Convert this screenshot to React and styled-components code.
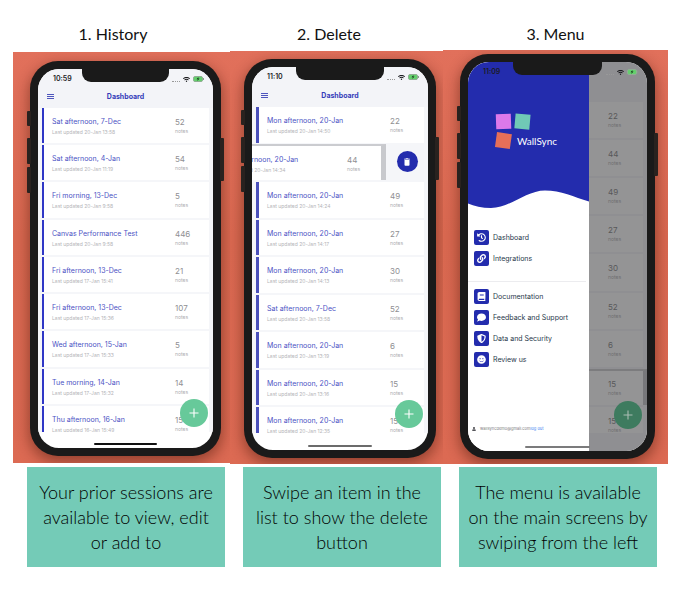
import React from "react";
import styled, { createGlobalStyle, css } from "styled-components";
import {
  FaHistory,
  FaLink,
  FaBook,
  FaComment,
  FaShieldAlt,
  FaSmile,
  FaUser,
  FaWifi,
} from "react-icons/fa";
import { MdDelete } from "react-icons/md";

const GlobalStyle = createGlobalStyle`
  * { box-sizing: border-box; }
  body {
    margin: 0;
    background: #fff;
    font-family: Inter, "Liberation Sans", sans-serif;
  }
  button { font: inherit; border: 0; padding: 0; cursor: pointer; }
  h2, h3, p, ul { margin: 0; padding: 0; }
  ul { list-style: none; }
`;

const indigo = "#232cad";

const Page = styled.main`
  padding-top: 22px;
`;

const Titles = styled.div`
  display: grid;
  grid-template-columns: 216fr 216fr 237fr;
  padding: 0 8px 0 5px;
`;

const StepTitle = styled.h2`
  font: 400 16px/24px Lato, sans-serif;
  color: #111;
  text-align: center;
`;

const Panels = styled.div`
  display: grid;
  grid-template-columns: 217fr 213fr 225fr;
  align-items: stretch;
  padding: 4px 14px 0 13px;
`;

const Panel = styled.section`
  margin: ${(p) => p.$margin};
  padding: ${(p) => p.$padding};
  overflow: hidden;
  background: linear-gradient(#e1705b, #d96850 45%, #dc6a53);
`;

const Phone = styled.div`
  position: relative;
  height: 100%;
  padding: 8px;
  border-radius: 28px;
  background: #1a1a1a;
  box-shadow: 0 5px 14px 1px rgba(60, 15, 5, 0.45);
`;

const SideKey = styled.span`
  position: absolute;
  top: ${(p) => p.$top}px;
  ${(p) => p.$side}: -3px;
  width: 4px;
  height: ${(p) => p.$size}px;
  border-radius: 1px;
  background: #29221f;
`;

const Screen = styled.div`
  position: relative;
  display: flex;
  flex-direction: ${(p) => (p.$row ? "row" : "column")};
  height: 100%;
  overflow: hidden;
  border-radius: 21px;
  background: #fff;
`;

const Notch = styled.span`
  position: absolute;
  z-index: 2;
  top: -1px;
  left: 25%;
  width: 50%;
  height: 14px;
  border-radius: 0 0 9px 9px;
  background: #1a1a1a;
`;

const StatusBar = styled.div`
  position: absolute;
  z-index: 2;
  top: 5px;
  left: 15px;
  right: 9px;
  display: flex;
  align-items: center;
  justify-content: space-between;
  height: 10px;
  font-size: 7px;
  line-height: 10px;
  font-weight: 600;
  color: #1b1b1f;
`;

const Signals = styled.span`
  display: flex;
  align-items: center;
  gap: 3px;
  svg { display: block; }
`;

const Dots = styled.span`
  width: 8px;
  margin-top: 4px;
  border-top: 1px dotted #999;
`;

const HomeBar = styled.span`
  position: absolute;
  bottom: 3px;
  left: 32%;
  width: 36%;
  height: 2px;
  border-radius: 1px;
  background: ${(p) => p.$color};
`;

const TopBar = styled.header`
  display: grid;
  grid-template-columns: 1fr auto 1fr;
  align-items: end;
  height: ${(p) => p.$height}px;
  padding: 0 9px 6px;
  background: #f3f4f8;
`;

const MenuButton = styled.button`
  justify-self: start;
  width: 7px;
  height: 10px;
  background: none;
  color: ${indigo};
  svg { display: block; }
`;

const ScreenTitle = styled.h3`
  font-size: 7px;
  line-height: 10px;
  font-weight: 700;
  color: #343bb8;
`;

const ListArea = styled.div`
  height: ${(p) => p.$height}px;
  overflow: hidden;
  background: #f5f6f9;
`;

const Rows = styled.ul`
  display: grid;
  grid-template-rows: repeat(9, 1fr);
  gap: 2px;
  height: ${(p) => p.$height}px;
`;

const Row = styled.li`
  display: flex;
  min-width: 0;
  margin: 0 4px;
  padding: 9px 0 0 8px;
  border-left: ${(p) => p.$bar};
  background: #fff;
`;

const Session = styled.div`
  flex: 1;
  min-width: 0;
  white-space: nowrap;
`;

const SessionName = styled.p`
  font-size: 7px;
  line-height: 10px;
  color: #4b52c4;
`;

const Updated = styled.p`
  font-size: 5px;
  line-height: 10px;
  color: #b4b4b8;
`;

const Count = styled.div`
  flex: none;
  width: 34px;
  font-size: 8px;
  line-height: 10px;
  color: ${(p) => (p.$dim ? "#58585a" : "#8f8f93")};
`;

const Notes = styled.p`
  font-size: 5px;
  line-height: 9px;
  color: ${(p) => (p.$dim ? "#6f6f71" : "#aeaeb2")};
`;

const SwipedRow = styled.li`
  display: flex;
  align-items: stretch;
  margin-top: -1px;
`;

const SwipedCard = styled.div`
  display: flex;
  flex: 1;
  min-width: 0;
  overflow: hidden;
  padding: 9px 0 0;
  border-top: 2px solid #cbccd0;
  border-right: 5px solid #c8c9cd;
  background: #fff;
`;

const SlidOff = styled(Session)`
  display: flex;
  flex-direction: column;
  align-items: flex-start;
  margin-left: -30px;
`;

const DeleteSlot = styled.div`
  display: grid;
  place-items: center;
  flex: none;
  width: 42px;
`;

const DeleteButton = styled.button`
  display: grid;
  place-items: center;
  width: 21px;
  height: 21px;
  border-radius: 50%;
  background: ${indigo};
  color: #fff;
`;

const AddButton = styled.button`
  position: absolute;
  right: 5px;
  bottom: ${(p) => p.$bottom}px;
  display: grid;
  place-items: center;
  width: 28px;
  height: 28px;
  border-radius: 50%;
  background: ${(p) => (p.$dim ? "#3e7b5f" : "#67c99a")};
  color: ${(p) => (p.$dim ? "#a9bdb3" : "#fff")};
`;

const Drawer = styled.aside`
  display: flex;
  flex-direction: column;
  flex: 121 1 0;
  min-width: 0;
  background: #fff;
`;

const Hero = styled.div`
  height: 128px;
  padding: 51px 0 0 27px;
  background: ${indigo};
`;

const Logo = styled.div`
  display: grid;
  grid-template-columns: 17px auto;
  column-gap: 5px;
`;

const Tiles = styled.svg`
  display: block;
  overflow: visible;
`;

const Brand = styled.span`
  align-self: end;
  padding-bottom: 1px;
  font: 400 10px/14px Lato, sans-serif;
  color: #fff;
`;

const Wave = styled.svg`
  display: block;
  width: 100%;
  height: 20px;
  margin-top: -1px;
`;

const Menu = styled.ul`
  display: grid;
  gap: 6px;
  padding: ${(p) => p.$padding};
`;

const Divider = styled.hr`
  width: 118px;
  max-width: 100%;
  margin: 0;
  border: 0;
  border-top: 1px solid #ececef;
`;

const MenuLink = styled.a`
  display: flex;
  align-items: center;
  gap: 4px;
  font-size: 7px;
  line-height: 15px;
  color: #27384a;
  text-decoration: none;
  white-space: nowrap;
`;

const IconTile = styled.span`
  display: grid;
  place-items: center;
  width: 15px;
  height: 15px;
  border-radius: 2px;
  background: ${indigo};
  color: #fff;
`;

const Account = styled.div`
  display: flex;
  align-items: center;
  margin-top: auto;
  padding: 0 4px 18px;
  font-size: 4px;
  line-height: 8px;
  color: #7c7c80;
  white-space: nowrap;
  svg { margin-right: 4px; color: #55555a; }
  a { color: #3b82f0; text-decoration: none; }
`;

const Peek = styled.div`
  flex: 58 1 0;
  min-width: 0;
  padding: 40px 0 18px;
  background: #8f8f92;
`;

const PeekArea = styled.div`
  height: 331px;
  overflow: hidden;
`;

const PeekRow = styled.li`
  padding: 9px 0 0 19px;
  margin-right: 4px;
  background: #949495;
  ${(p) =>
    p.$active &&
    css`
      margin-right: 0;
      border-top: 2px solid #7c7c7e;
      border-right: 4px solid #78787b;
      padding-top: 8px;
    `}
`;

const Captions = styled.div`
  display: grid;
  grid-template-columns: repeat(3, 1fr);
  gap: 18px;
  padding: 3px 25px 24px 27px;
`;

const Caption = styled.p`
  padding: 13px 7px 12px;
  background: #74cbb7;
  font: 300 18px/25px Lato, sans-serif;
  color: #000;
  text-align: center;
`;

const historyRows = [
  ["Sat afternoon, 7-Dec", "20-Jan 13:58", 52],
  ["Sat afternoon, 4-Jan", "20-Jan 11:19", 54],
  ["Fri morning, 13-Dec", "20-Jan 9:58", 5],
  ["Canvas Performance Test", "20-Jan 9:58", 446],
  ["Fri afternoon, 13-Dec", "17-Jan 15:41", 21],
  ["Fri afternoon, 13-Dec", "17-Jan 15:36", 107],
  ["Wed afternoon, 15-Jan", "17-Jan 15:33", 5],
  ["Tue morning, 14-Jan", "17-Jan 15:32", 14],
  ["Thu afternoon, 16-Jan", "16-Jan 15:49", 15],
];

const deleteRows = [
  ["Mon afternoon, 20-Jan", "20-Jan 14:50", 22],
  ["Mon afternoon, 20-Jan", "20-Jan 14:34", 44],
  ["Mon afternoon, 20-Jan", "20-Jan 14:24", 49],
  ["Mon afternoon, 20-Jan", "20-Jan 14:17", 27],
  ["Mon afternoon, 20-Jan", "20-Jan 14:13", 30],
  ["Sat afternoon, 7-Dec", "20-Jan 13:58", 52],
  ["Mon afternoon, 20-Jan", "20-Jan 13:19", 6],
  ["Mon afternoon, 20-Jan", "20-Jan 13:16", 15],
  ["Mon afternoon, 20-Jan", "20-Jan 12:35", 15],
];

const mainMenu = [
  ["Dashboard", FaHistory],
  ["Integrations", FaLink],
];

const helpMenu = [
  ["Documentation", FaBook],
  ["Feedback and Support", FaComment],
  ["Data and Security", FaShieldAlt],
  ["Review us", FaSmile],
];

function Device({ time, keysTop, home, row, children }) {
  return (
    <Phone>
      <SideKey $side="left" $top={keysTop} $size={15} />
      <SideKey $side="left" $top={keysTop + 27} $size={26} />
      <SideKey $side="left" $top={keysTop + 56} $size={26} />
      <SideKey $side="right" $top={keysTop + 27} $size={43} />
      <Screen $row={row}>
        <Notch />
        <StatusBar>
          <span>{time}</span>
          <Signals>
            <Dots />
            <FaWifi size={7} />
            <svg width="11" height="6" viewBox="0 0 11 6" aria-hidden="true">
              <rect x="0.5" y="0.5" width="9" height="5" rx="1.5" fill="#63d06c" stroke="#8fae92" />
              <path d="M5.5 1 3.5 3.3h1.3L4.4 5l2.1-2.4H5.2z" fill="#16361a" />
              <path d="M10.5 2v2" stroke="#8d9a8f" />
            </svg>
          </Signals>
        </StatusBar>
        {children}
        <HomeBar $color={home} />
      </Screen>
    </Phone>
  );
}

function Header({ height }) {
  return (
    <TopBar $height={height}>
      <MenuButton aria-label="Open menu">
        <svg width="7" height="10" viewBox="0 0 7 10" stroke="currentColor">
          <path d="M0 2.5h7M0 4.5h7M0 6.5h7" strokeWidth="0.8" />
        </svg>
      </MenuButton>
      <ScreenTitle>Dashboard</ScreenTitle>
    </TopBar>
  );
}

function NoteCount({ value, dim }) {
  return (
    <Count $dim={dim}>
      {value}
      <Notes $dim={dim}>notes</Notes>
    </Count>
  );
}

function SessionList({ rows, height, total, bar, swiped }) {
  return (
    <ListArea $height={height}>
      <Rows $height={total}>
        {rows.map(([name, date, count], i) =>
          i === swiped ? (
            <SwipedRow key={i}>
              <SwipedCard>
                <SlidOff>
                  <SessionName>{name}</SessionName>
                  <Updated>Last updated {date}</Updated>
                </SlidOff>
                <NoteCount value={count} />
              </SwipedCard>
              <DeleteSlot>
                <DeleteButton aria-label="Delete session">
                  <MdDelete size={10} />
                </DeleteButton>
              </DeleteSlot>
            </SwipedRow>
          ) : (
            <Row key={i} $bar={bar}>
              <Session>
                <SessionName>{name}</SessionName>
                <Updated>Last updated {date}</Updated>
              </Session>
              <NoteCount value={count} />
            </Row>
          )
        )}
      </Rows>
    </ListArea>
  );
}

function Add({ bottom, dim }) {
  return (
    <AddButton $bottom={bottom} $dim={dim} aria-label="Add session">
      <svg width="10" height="10" viewBox="0 0 10 10" stroke="currentColor">
        <path d="M5 0.5v9M0.5 5h9" strokeWidth="1.1" />
      </svg>
    </AddButton>
  );
}

function MenuItems({ items, padding }) {
  return (
    <Menu $padding={padding}>
      {items.map(([label, Icon]) => (
        <li key={label}>
          <MenuLink href="#">
            <IconTile>
              <Icon size={9} />
            </IconTile>
            {label}
          </MenuLink>
        </li>
      ))}
    </Menu>
  );
}

export default function App() {
  return (
    <>
      <GlobalStyle />
      <Page>
        <Titles>
          <StepTitle>1. History</StepTitle>
          <StepTitle>2. Delete</StepTitle>
          <StepTitle>3. Menu</StepTitle>
        </Titles>

        <Panels>
          <Panel $margin="2px 0 1px" $padding="9px 9px 7px 17px">
            <Device time="10:59" keysTop={50} home="#111">
              <Header height={39} />
              <SessionList rows={historyRows} height={324} total={333} bar="2px solid #2f37c6" />
              <Add bottom={21} />
            </Device>
          </Panel>

          <Panel $margin="1px 0 0" $padding="8px 7px 6px 14px">
            <Device time="11:10" keysTop={51} home="#6b6b6b">
              <Header height={40} />
              <SessionList
                rows={deleteRows}
                height={326}
                total={336}
                bar="3px solid #4a50bb"
                swiped={1}
              />
              <Add bottom={22} />
            </Device>
          </Panel>

          <Panel $margin="0" $padding="4px 13px 5px 17px">
            <Device time="11:09" keysTop={52} home="#7b7b7c" row>
              <Drawer>
                <Hero>
                  <Logo>
                    <Tiles width="17" height="36" viewBox="0 0 17 36" aria-hidden="true">
                      <rect x="1" y="1" width="15" height="15" fill="#dc79ea" transform="rotate(-2 8 8)" />
                      <rect x="20" y="1" width="15" height="15" fill="#70c9b6" transform="rotate(5 27 8)" />
                      <rect x="1" y="20" width="15" height="15" fill="#e56f58" transform="rotate(8 8 27)" />
                    </Tiles>
                    <Brand>WallSync</Brand>
                  </Logo>
                </Hero>
                <Wave viewBox="0 0 121 20" preserveAspectRatio="none" aria-hidden="true">
                  <path
                    d="M0 0H121V12.500C106 8 93 1.500 77 1.500C58 1.500 42 19 23 19C14 19 6 17 0 14.500Z"
                    fill={indigo}
                  />
                </Wave>
                <MenuItems items={mainMenu} padding="21px 6px 15px" />
                <Divider />
                <MenuItems items={helpMenu} padding="7px 6px 0" />
                <Account>
                  <FaUser size={4} />
                  wallsyncdemo@gmail.com<a href="#">log out</a>
                </Account>
              </Drawer>
              <Peek>
                <PeekArea>
                  <Rows $height={341}>
                    {deleteRows.map(([, , count], i) => (
                      <PeekRow key={i} $active={i === 7}>
                        <NoteCount value={count} dim />
                      </PeekRow>
                    ))}
                  </Rows>
                </PeekArea>
              </Peek>
              <Add bottom={22} dim />
            </Device>
          </Panel>
        </Panels>

        <Captions>
          <Caption>Your prior sessions are available to view, edit or add to</Caption>
          <Caption>Swipe an item in the list to show the delete button</Caption>
          <Caption>The menu is available on the main screens by swiping from the left</Caption>
        </Captions>
      </Page>
    </>
  );
}
